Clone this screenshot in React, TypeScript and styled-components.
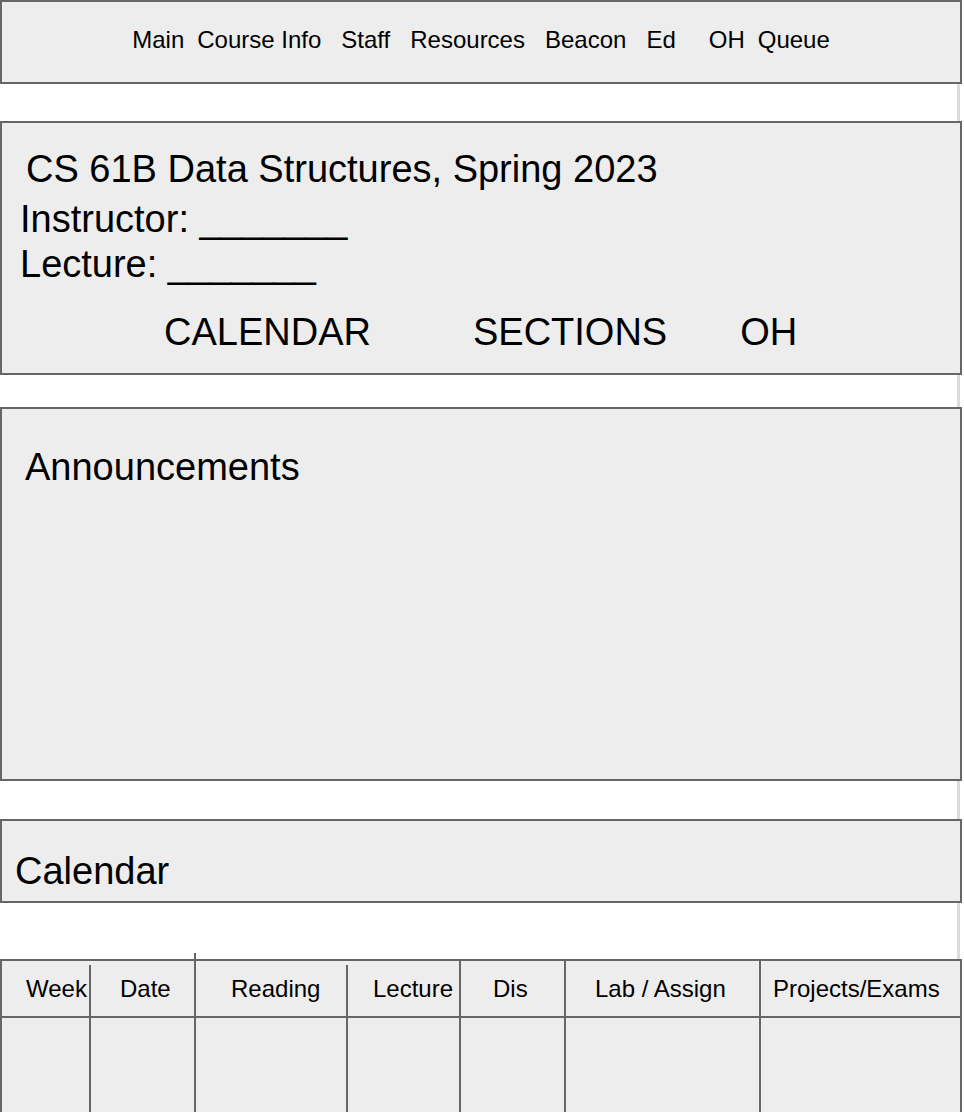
import React from "react";
import styled, { createGlobalStyle } from "styled-components";

const GlobalStyle = createGlobalStyle`
  html, body {
    margin: 0;
    padding: 0;
    background: #ffffff;
  }
  body {
    font-family: "Liberation Sans", Arial, Helvetica, sans-serif;
    color: #000;
  }
  * { box-sizing: border-box; }
`;

const Page = styled.div`
  width: 964px;
  display: flex;
  flex-direction: column;
`;

const Box = styled.section<{ $h: number; $pt: number; $pl: number }>`
  width: 962px;
  height: ${(p) => p.$h}px;
  background: #ededed;
  border: 2px solid #666666;
  padding-top: ${(p) => p.$pt}px;
  padding-left: ${(p) => p.$pl}px;
`;

const NavBar = styled.nav`
  width: 962px;
  height: 84px;
  background: #ededed;
  border: 2px solid #666666;
  padding-top: 24px;
  display: flex;
  justify-content: center;
  align-items: flex-start;
  font-size: 24px;
`;

const NavLink = styled.a<{ $gap: number }>`
  margin-left: ${(p) => p.$gap}px;
  color: #000;
  text-decoration: none;
  white-space: nowrap;
`;

const Body = styled.main`
  display: flex;
  flex-direction: column;
  padding-top: 37px;
  padding-bottom: 56px;
  background: linear-gradient(
    to right,
    transparent 957px,
    #dcdcdc 957px,
    #dcdcdc 960px,
    transparent 960px
  );
`;

const Gap = styled.div<{ $h: number }>`
  height: ${(p) => p.$h}px;
`;

const Title = styled.h1`
  margin: 0 0 6px 6px;
  font-size: 38px;
  font-weight: normal;
  line-height: 44px;
`;

const InfoLine = styled.div`
  font-size: 38px;
  line-height: 45px;
`;

const Tabs = styled.div`
  display: flex;
  margin-top: 23px;
  padding-left: 144px;
  font-size: 38px;
  line-height: 44px;
`;

const Tab = styled.a<{ $gap: number }>`
  margin-left: ${(p) => p.$gap}px;
  color: #000;
  text-decoration: none;
`;

const SectionTitle = styled.h2`
  margin: 0;
  font-size: 38px;
  font-weight: normal;
  line-height: 44px;
`;

const Table = styled.div`
  width: 962px;
  border-top: 2px solid #666666;
  border-left: 2px solid #666666;
  border-right: 2px solid #666666;
  display: grid;
  grid-template-columns: 89px 105px 152px 113px 105px 195px 1fr;
  background: #ededed;
`;

const HeadCell = styled.div<{ $pl: number; $inset?: boolean; $tall?: boolean; $last?: boolean }>`
  position: relative;
  height: 57px;
  padding-top: 14px;
  padding-left: ${(p) => p.$pl}px;
  font-size: 24px;
  white-space: nowrap;
  border-bottom: 2px solid #666666;
  border-right: ${(p) => (p.$last || p.$inset || p.$tall ? "none" : "2px solid #666666")};
  &::after {
    content: "";
    display: ${(p) => (p.$inset || p.$tall ? "block" : "none")};
    position: absolute;
    right: 0;
    width: 2px;
    top: ${(p) => (p.$tall ? "-8px" : "4px")};
    bottom: 0;
    background: #666666;
  }
`;

const BodyCell = styled.div<{ $last?: boolean }>`
  height: 120px;
  border-right: ${(p) => (p.$last ? "none" : "2px solid #666666")};
`;

const navItems: [string, number][] = [
  ["Main", 0],
  ["Course Info", 13],
  ["Staff", 20],
  ["Resources", 20],
  ["Beacon", 20],
  ["Ed", 20],
  ["OH", 33],
  ["Queue", 13],
];

const headers: { label: string; pl: number; inset?: boolean; tall?: boolean }[] = [
  { label: "Week", pl: 24, inset: true },
  { label: "Date", pl: 29, tall: true },
  { label: "Reading", pl: 35, inset: true },
  { label: "Lecture", pl: 25 },
  { label: "Dis", pl: 32 },
  { label: "Lab / Assign", pl: 29 },
  { label: "Projects/Exams", pl: 12 },
];

export default function App() {
  return (
    <>
      <GlobalStyle />
      <Page>
        <NavBar>
          {navItems.map(([label, gap]) => (
            <NavLink key={label} $gap={gap} href="#">
              {label}
            </NavLink>
          ))}
        </NavBar>
        <Body>
          <Box $h={254} $pt={24} $pl={18}>
            <Title>CS 61B Data Structures, Spring 2023</Title>
            <InfoLine>Instructor: _______</InfoLine>
            <InfoLine>Lecture: _______</InfoLine>
            <Tabs>
              <Tab $gap={0} href="#">CALENDAR</Tab>
              <Tab $gap={102} href="#">SECTIONS</Tab>
              <Tab $gap={73} href="#">OH</Tab>
            </Tabs>
          </Box>
          <Gap $h={32} />
          <Box $h={374} $pt={36} $pl={23}>
            <SectionTitle>Announcements</SectionTitle>
          </Box>
          <Gap $h={38} />
          <Box $h={84} $pt={28} $pl={13}>
            <SectionTitle>Calendar</SectionTitle>
          </Box>
        </Body>
        <Table>
          {headers.map((h, i) => (
            <HeadCell
              key={h.label}
              $pl={h.pl}
              $inset={h.inset}
              $tall={h.tall}
              $last={i === headers.length - 1}
            >
              {h.label}
            </HeadCell>
          ))}
          {headers.map((h, i) => (
            <BodyCell key={h.label + "-body"} $last={i === headers.length - 1} />
          ))}
        </Table>
      </Page>
    </>
  );
}
